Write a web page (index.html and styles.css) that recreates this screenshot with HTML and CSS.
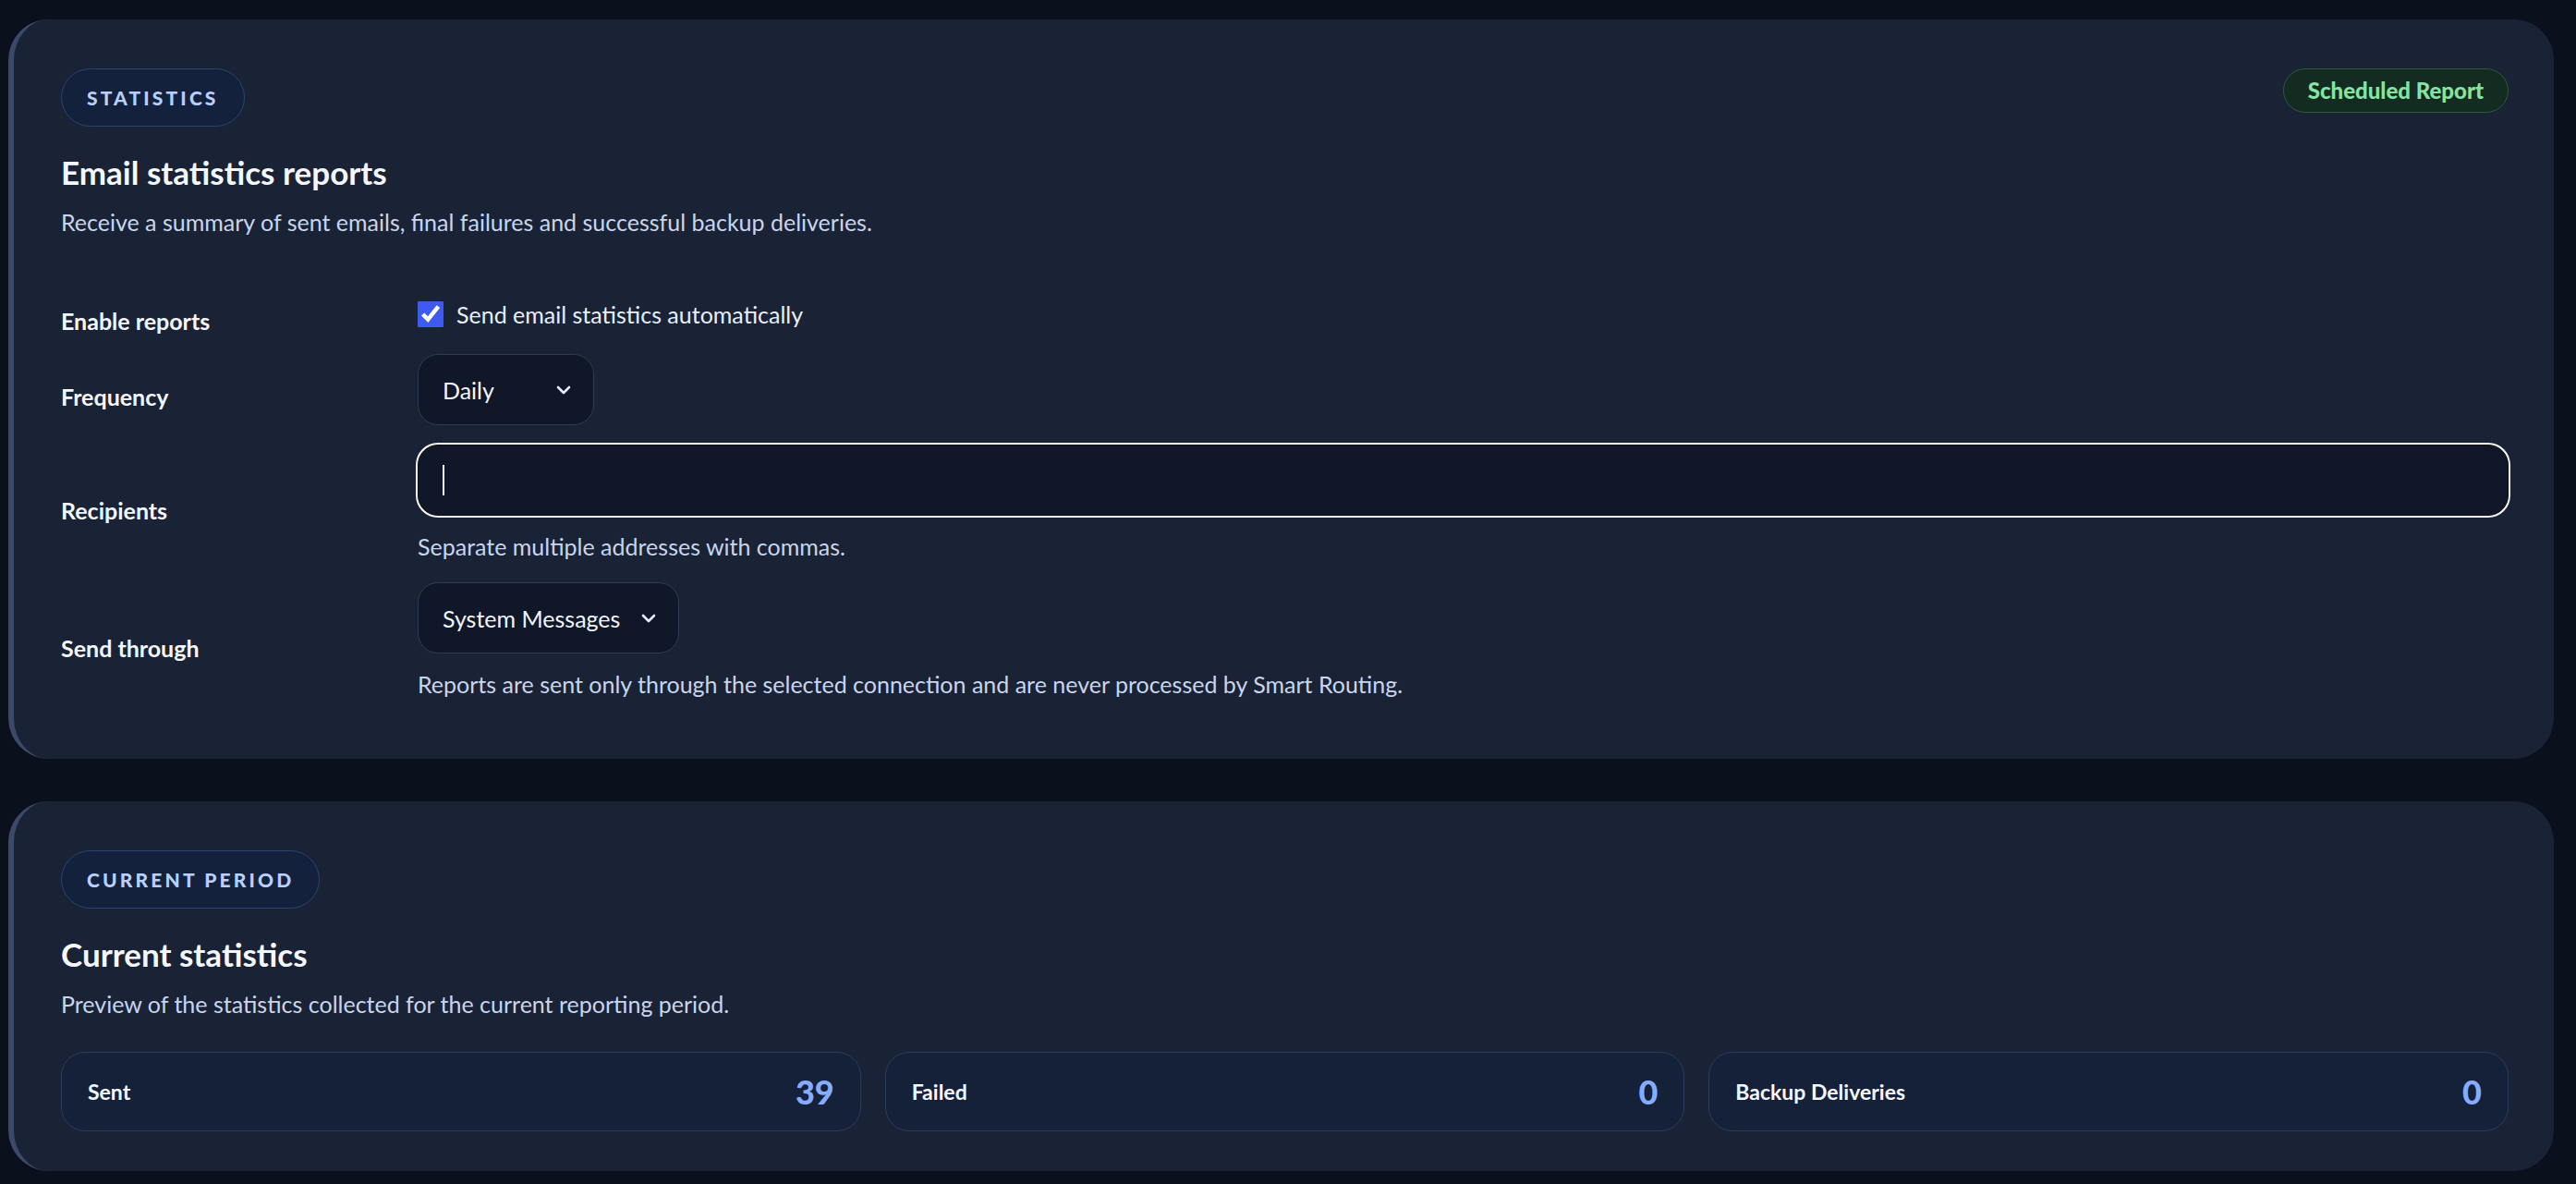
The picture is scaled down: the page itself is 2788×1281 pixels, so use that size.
FILE: index.html
```html
<!DOCTYPE html>
<html lang="en">
<head>
    <meta charset="UTF-8">
    <meta name="viewport" content="width=device-width, initial-scale=1.0">
    <title>Email statistics</title>
    <link rel="stylesheet" href="styles.css">
</head>
<body>
    <main class="settings-page">
        <!-- Report settings -->
        <section class="panel">
            <header class="panel-head">
                <div>
                    <span class="tag">Statistics</span>
                    <h2 class="panel-title">Email statistics reports</h2>
                    <p class="panel-desc">Receive a summary of sent emails, final failures and successful backup deliveries.</p>
                </div>
                <span class="status-pill">Scheduled Report</span>
            </header>

            <div class="form-grid">
                <label class="form-label" for="enabled">Enable reports</label>
                <div class="form-field">
                    <label class="check">
                        <input type="checkbox" id="enabled" checked>
                        <span>Send email statistics automatically</span>
                    </label>
                </div>

                <label class="form-label" for="frequency">Frequency</label>
                <div class="form-field">
                    <div class="select select-freq">
                        <select id="frequency">
                            <option>Daily</option>
                            <option>Weekly</option>
                            <option>Monthly</option>
                        </select>
                        <svg class="chevron" viewBox="0 0 16 10" width="16" height="10"><path d="M2 2l6 6 6-6" fill="none" stroke="currentColor" stroke-width="2.6" stroke-linecap="round" stroke-linejoin="round"/></svg>
                    </div>
                </div>

                <label class="form-label" for="recipients">Recipients</label>
                <div class="form-field">
                    <div class="text-field">
                        <input type="text" id="recipients" class="text-input is-focused">
                        <span class="caret"></span>
                    </div>
                    <p class="help">Separate multiple addresses with commas.</p>
                </div>

                <label class="form-label" for="connection">Send through</label>
                <div class="form-field">
                    <div class="select select-conn">
                        <select id="connection">
                            <option>System Messages</option>
                        </select>
                        <svg class="chevron" viewBox="0 0 16 10" width="16" height="10"><path d="M2 2l6 6 6-6" fill="none" stroke="currentColor" stroke-width="2.6" stroke-linecap="round" stroke-linejoin="round"/></svg>
                    </div>
                    <p class="help">Reports are sent only through the selected connection and are never processed by Smart Routing.</p>
                </div>
            </div>
        </section>

        <!-- Numbers for the running period -->
        <section class="panel">
            <header class="panel-head">
                <div>
                    <span class="tag">Current period</span>
                    <h2 class="panel-title">Current statistics</h2>
                    <p class="panel-desc">Preview of the statistics collected for the current reporting period.</p>
                </div>
            </header>

            <div class="stat-grid">
                <div class="stat-card">
                    <span class="stat-label">Sent</span>
                    <strong class="stat-value">39</strong>
                </div>
                <div class="stat-card">
                    <span class="stat-label">Failed</span>
                    <strong class="stat-value">0</strong>
                </div>
                <div class="stat-card">
                    <span class="stat-label">Backup Deliveries</span>
                    <strong class="stat-value">0</strong>
                </div>
            </div>
        </section>
    </main>
</body>
</html>
```

FILE: styles.css
```css
/* base */
* {
    box-sizing: border-box;
    margin: 0;
    padding: 0;
}
body {
    font-family: Lato, "Open Sans", sans-serif;
    font-size: 25px;
    color: #f1f5fb;
    background: #0a101c;
}
.settings-page {
    display: flex;
    flex-direction: column;
    gap: 46px;
    padding: 21px 24px 14px 9px;
}

/* panels */
.panel {
    background: #1a2336;
    border-left: 6px solid #3a4a68;
    border-radius: 44px;
    padding: 53px 49px 63px 51px;
}
.panel + .panel {
    padding-bottom: 43px;
}
.panel-head {
    display: flex;
    justify-content: space-between;
    align-items: flex-start;
}
.tag {
    display: inline-block;
    height: 63px;
    line-height: 61px;
    padding: 0 27px;
    border: 1px solid #2d4472;
    border-radius: 999px;
    background: #14213d;
    color: #b9cffd;
    font-size: 21px;
    font-weight: 900;
    letter-spacing: 0.15em;
    text-transform: uppercase;
}
.panel-title {
    margin-top: 28px;
    font-size: 35px;
    font-weight: 700;
    line-height: 1.2;
    color: #f4f7fc;
}
.panel-desc {
    margin-top: 16px;
    color: #c9d5ec;
    line-height: 1.4;
}
.status-pill {
    display: inline-block;
    height: 48px;
    line-height: 46px;
    padding: 0 26px;
    border: 1px solid #2b5a3b;
    border-radius: 999px;
    background: #132b20;
    color: #85e3a4;
    font-size: 24px;
    font-weight: 900;
}

/* form */
.form-grid {
    display: grid;
    grid-template-columns: 386px 1fr;
    align-items: center;
    row-gap: 21px;
    margin-top: 60px;
}
.form-label {
    padding-top: 14px;
    font-weight: 700;
    color: #f4f7fc;
}
.check {
    display: flex;
    align-items: center;
    gap: 14px;
    color: #e8eef9;
}
.check input {
    width: 28px;
    height: 28px;
    accent-color: #3d5af1;
    margin: 0;
}
.select {
    position: relative;
    display: inline-block;
}
.select select {
    appearance: none;
    height: 77px;
    padding: 0 26px;
    border: 1px solid #2f3b52;
    border-radius: 22px;
    background: #0f1729;
    color: #f1f5fb;
    font-family: inherit;
    font-size: 25px;
}
.select-freq select {
    width: 191px;
}
.select-conn select {
    width: 283px;
}
.chevron {
    position: absolute;
    right: 25px;
    top: 34px;
    color: #e6ecf7;
    pointer-events: none;
}
.text-field {
    position: relative;
}
.text-input {
    display: block;
    width: 100%;
    height: 77px;
    padding: 0 26px;
    border: 1px solid #2f3b52;
    border-radius: 22px;
    background: #0f1729;
    color: #f1f5fb;
    font-family: inherit;
    font-size: 25px;
    outline: none;
}
.text-input.is-focused {
    border-color: #101010;
    box-shadow: 0 0 0 2px #f5f5f5;
}
.caret {
    position: absolute;
    left: 27px;
    top: 22px;
    width: 2px;
    height: 33px;
    background: #f1f5fb;
}
.help {
    margin-top: 16px;
    color: #c9d5ec;
    line-height: 1.4;
}

/* stats */
.stat-grid {
    display: grid;
    grid-template-columns: repeat(3, 1fr);
    gap: 26px;
    margin-top: 34px;
}
.stat-card {
    display: flex;
    justify-content: space-between;
    align-items: center;
    height: 86px;
    padding: 0 28px;
    border: 1px solid #2b3c5e;
    border-radius: 26px;
    background: #152039;
}
.stat-label {
    font-size: 23px;
    font-weight: 700;
    color: #f4f7fc;
}
.stat-value {
    font-size: 36px;
    font-weight: 900;
    color: #86acff;
}
```
